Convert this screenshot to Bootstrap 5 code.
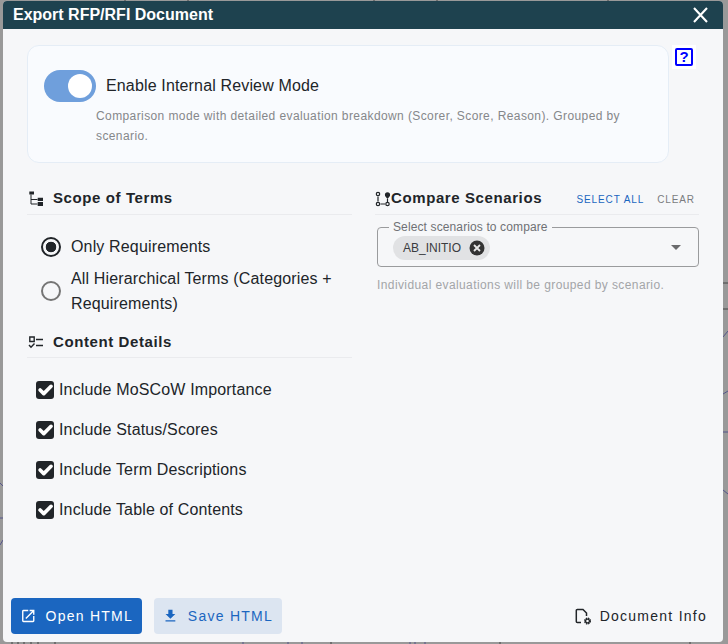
<!DOCTYPE html>
<html lang="en">
<head>
<meta charset="utf-8">
<title>Export RFP/RFI Document</title>
<link href="https://cdn.jsdelivr.net/npm/bootstrap@5.3.0/dist/css/bootstrap.min.css" rel="stylesheet">
<style>
html,body{height:100%;margin:0}
body{background:#999;font-family:"Liberation Sans",Arial,sans-serif;color:#212529;overflow:hidden;padding:1px 5px 2px 3px}
.dlg{height:641px;width:720px;background:#f6f7f9;border-radius:4px;overflow:hidden;position:relative}
.dlg-head{height:28px;background:#1e424f;color:#fff;padding:0 13px 0 10px;flex:none}
.dlg-title{font-size:16px;font-weight:700;margin:0;line-height:28px}
.x-btn{background:none;border:0;padding:0;width:20px;height:20px;line-height:0;color:#fff}
.dlg-main{padding:16px 24px 0;position:relative}
.review{width:642px;height:118px;background:#f9fbfe;border:1px solid #e5edf6;border-radius:12px;padding:24px 16px 0}
.review .form-check-input.sw{width:52px;height:32px;margin:0;background-color:#6f9fdc;border:0;flex:none}
.rev-label{font-size:16px;letter-spacing:.15px;margin-left:10px}
.rev-desc{font-size:12px;line-height:20px;letter-spacing:.4px;color:#85878a;margin:4px 0 0 52px}
.help{position:absolute;left:669px;top:16px;width:24px;height:24px;background:#fff;display:flex;align-items:center;justify-content:center}
.help span{display:block;width:18px;height:18px;border:2px solid #00f;color:#00f;border-radius:2px;font:700 15px/14px "Liberation Sans",sans-serif;text-align:center}
.cols{display:flex;gap:23px;margin-top:25px}
.lcol{width:325px}.rcol{width:324px}
.sec-head{display:flex;align-items:center;height:27px;padding-bottom:5px;border-bottom:1px solid #eaebee;font-size:15px;font-weight:700;letter-spacing:.6px}
.sec-head svg{flex:none}
.ico-gap{margin-right:9px}
.opts{padding:19px 0 0 14px}
.form-check-input.rd{width:20px;height:20px;margin:0;flex:none;background:transparent;border:2px solid #757575}
.form-check-input.rd:checked{border-color:#212529;background:radial-gradient(circle,#212529 0 5px,transparent 5.6px)}
.opt-row{display:flex;align-items:center;font-size:16px;letter-spacing:.15px;line-height:25px;gap:10px}
.opt-one{height:25px}
.opt-two{margin-top:7px}
.sec2{margin-top:15px;padding-bottom:3px}
.checks{padding:12px 0 0 9px}
.chk-row{display:flex;align-items:center;height:40px;font-size:16px;letter-spacing:.15px;gap:5px}
.form-check-input.ck{width:18px;height:18px;margin:0;flex:none;background-color:#212529;background-size:135%;border:0;border-radius:3px}
.mini{background:none;border:0;padding:0;font-size:10px;letter-spacing:.9px}
.mini-a{color:#1b66c0}.mini-b{color:#7a7c80;margin-left:13px}
.sel-wrap{position:relative;margin:12px 0 0 2px;height:40px;border:1px solid #9a9b9d;border-radius:4px;padding:7px 15px}
.sel-cap{position:absolute;left:11px;top:-8px;background:#f6f7f9;padding:0 4px;font-size:12px;line-height:14px;letter-spacing:.12px;color:#6f7175}
.chip-x{display:inline-flex;align-items:center;height:24px;width:97px;background:#e1e2e4;border-radius:12px;padding-left:10px;font-size:12px;line-height:24px;color:#3a3c3f}
.chip-x svg{margin-left:8px}
.caret{position:absolute;right:17px;top:17px;width:0;height:0;border:5px solid transparent;border-top-color:#6a6b6d;border-bottom:0}
.hint{font-size:12px;line-height:16px;letter-spacing:.4px;color:#a3a5a8;margin:10px 0 0 2px}
.dlg-foot{position:absolute;left:8px;right:16px;bottom:8px;height:36px}
.act{height:36px;border:0;border-radius:4px;font-size:14px;line-height:36px;letter-spacing:1.25px;padding:0 9px;display:flex;align-items:center;gap:9px;white-space:nowrap}
.act-a{background:#1b66c0;color:#fff;width:131px}
.act-b{background:#dce5f1;color:#1b66c0;width:128px;margin-left:12px;padding-left:8px}
.act-c{background:none;color:#212529;padding:0;gap:8px}
.bg-line{position:absolute;left:0;top:0;pointer-events:none}
</style>
</head>
<body>
<svg class="bg-line" width="728" height="644" viewBox="0 0 728 644" fill="none" stroke="#55558a" stroke-width="1">
<path d="M723 337L728 331M723 394L728 391M723 432H728M723 490L728 494"/>
<path d="M0 483L3 486M0 518H3M0 545L3 540"/>
<path d="M243 642V644M288 642V644M302 642V644M410 642V644M415 642V644M425 642V644"/>
<path d="M723 283H728M723 309H728M12 642V644M18 642V644M24 642V644M31 642V644M38 642V644M55 642V644M331 642V644M500 642V644M690 642V644" stroke="#444"/>
<path d="M125 0V2M188 0V2M374 0V2M437 0V2M608 0V2" stroke="#444"/>
</svg>
<div class="dlg d-flex flex-column">
  <div class="dlg-head d-flex align-items-center justify-content-between">
    <h5 class="dlg-title">Export RFP/RFI Document</h5>
    <button class="x-btn" type="button" aria-label="Close"><svg width="20" height="20" viewBox="0 0 20 20"><path d="M4 3l13 14M17 3L4 17" stroke="#fff" stroke-width="2.1" fill="none"/></svg></button>
  </div>
  <div class="dlg-main flex-grow-1">
    <div class="review">
      <div class="d-flex align-items-center form-switch p-0">
        <input class="form-check-input sw" type="checkbox" role="switch" checked>
        <span class="rev-label">Enable Internal Review Mode</span>
      </div>
      <p class="rev-desc">Comparison mode with detailed evaluation breakdown (Scorer, Score, Reason). Grouped by scenario.</p>
    </div>
    <div class="help"><span>?</span></div>
    <div class="cols">
      <div class="lcol">
        <div class="sec-head">
          <svg class="ico-gap" width="17" height="17" viewBox="0 0 17 17"><path d="M2.300 1.500H7v3H2.300zM10.700 7.700H16V11h-5.300zM10.700 12H16v4h-5.300z" fill="#212529"/><path d="M4 4.500v9.500h6.500M4 9.500h6.500" stroke="#212529" fill="none"/></svg>
          Scope of Terms
        </div>
        <div class="opts">
          <label class="opt-row opt-one"><input class="form-check-input rd" type="radio" name="scope" checked>Only Requirements</label>
          <label class="opt-row opt-two"><input class="form-check-input rd" type="radio" name="scope"><span>All Hierarchical Terms (Categories +<br>Requirements)</span></label>
        </div>
        <div class="sec-head sec2">
          <svg class="ico-gap" width="17" height="17" viewBox="0 0 17 17"><path d="M2.800 3h4.400v4.500H2.800z" fill="none" stroke="#212529" stroke-width="1.400"/><path d="M9 5.500h7M9 11.500h7" stroke="#212529" stroke-width="1.400"/><path d="M2 11l2 2.300 3.500-3.800" stroke="#212529" stroke-width="1.400" fill="none"/></svg>
          Content Details
        </div>
        <div class="checks">
          <label class="chk-row"><input class="form-check-input ck" type="checkbox" checked>Include MoSCoW Importance</label>
          <label class="chk-row"><input class="form-check-input ck" type="checkbox" checked>Include Status/Scores</label>
          <label class="chk-row"><input class="form-check-input ck" type="checkbox" checked>Include Term Descriptions</label>
          <label class="chk-row"><input class="form-check-input ck" type="checkbox" checked>Include Table of Contents</label>
        </div>
      </div>
      <div class="rcol">
        <div class="sec-head justify-content-between">
          <span class="d-flex align-items-center">
            <svg width="16" height="16" viewBox="0 0 16 16"><circle cx="3" cy="3" r="1.700" fill="none" stroke="#212529" stroke-width="1.200"/><circle cx="3" cy="13" r="1.700" fill="none" stroke="#212529" stroke-width="1.200"/><circle cx="12.500" cy="13" r="1.700" fill="none" stroke="#212529" stroke-width="1.200"/><path d="M3 5.500v5M5.500 13h4.500M12.500 11V8" stroke="#212529" stroke-width="1.200"/><path d="M12.500 8c-2-2-2.600-3-2.600-4.200a2.600 2.600 0 0 1 5.200 0C15.100 5 14.500 6 12.500 8z" fill="#212529"/></svg>
            Compare Scenarios
          </span>
          <span class="pe-1"><button class="mini mini-a" type="button">SELECT ALL</button><button class="mini mini-b" type="button">CLEAR</button></span>
        </div>
        <div class="sel-wrap">
          <span class="sel-cap">Select scenarios to compare</span>
          <span class="chip-x">AB_INITIO<svg width="16" height="16" viewBox="0 0 16 16"><circle cx="8" cy="8" r="7.500" fill="#333"/><path d="M5 5l6 6M11 5l-6 6" stroke="#e8e8e8" stroke-width="1.800"/></svg></span>
          <span class="caret"></span>
        </div>
        <div class="hint">Individual evaluations will be grouped by scenario.</div>
      </div>
    </div>
  </div>
  <div class="dlg-foot d-flex align-items-center">
    <button class="act act-a" type="button"><svg width="18" height="18" viewBox="0 0 24 24" fill="#fff"><path d="M19 19H5V5h7V3H5a2 2 0 0 0-2 2v14a2 2 0 0 0 2 2h14a2 2 0 0 0 2-2v-7h-2v7zM14 3v2h3.590l-9.830 9.830 1.410 1.410L19 6.410V10h2V3h-7z"/></svg>Open HTML</button>
    <button class="act act-b" type="button"><svg width="18" height="18" viewBox="0 0 24 24" fill="#1b66c0"><path d="M19 9h-4V3H9v6H5l7 7 7-7zM5 18v2h14v-2H5z"/></svg>Save HTML</button>
    <button class="act act-c ms-auto" type="button"><svg width="18" height="18" viewBox="0 0 18 18" fill="none"><path d="M7 15.500H3.300a1 1 0 0 1-1-1v-11a1 1 0 0 1 1-1H9l3.500 3.500V9" stroke="#212529" stroke-width="1.500"/><circle cx="13.500" cy="14" r="2.900" stroke="#212529" stroke-width="1.200" stroke-dasharray="1.500 .8"/><circle cx="13.500" cy="14" r="1.900" fill="none" stroke="#212529" stroke-width="1.300"/></svg>Document Info</button>
  </div>
</div>
</body>
</html>
